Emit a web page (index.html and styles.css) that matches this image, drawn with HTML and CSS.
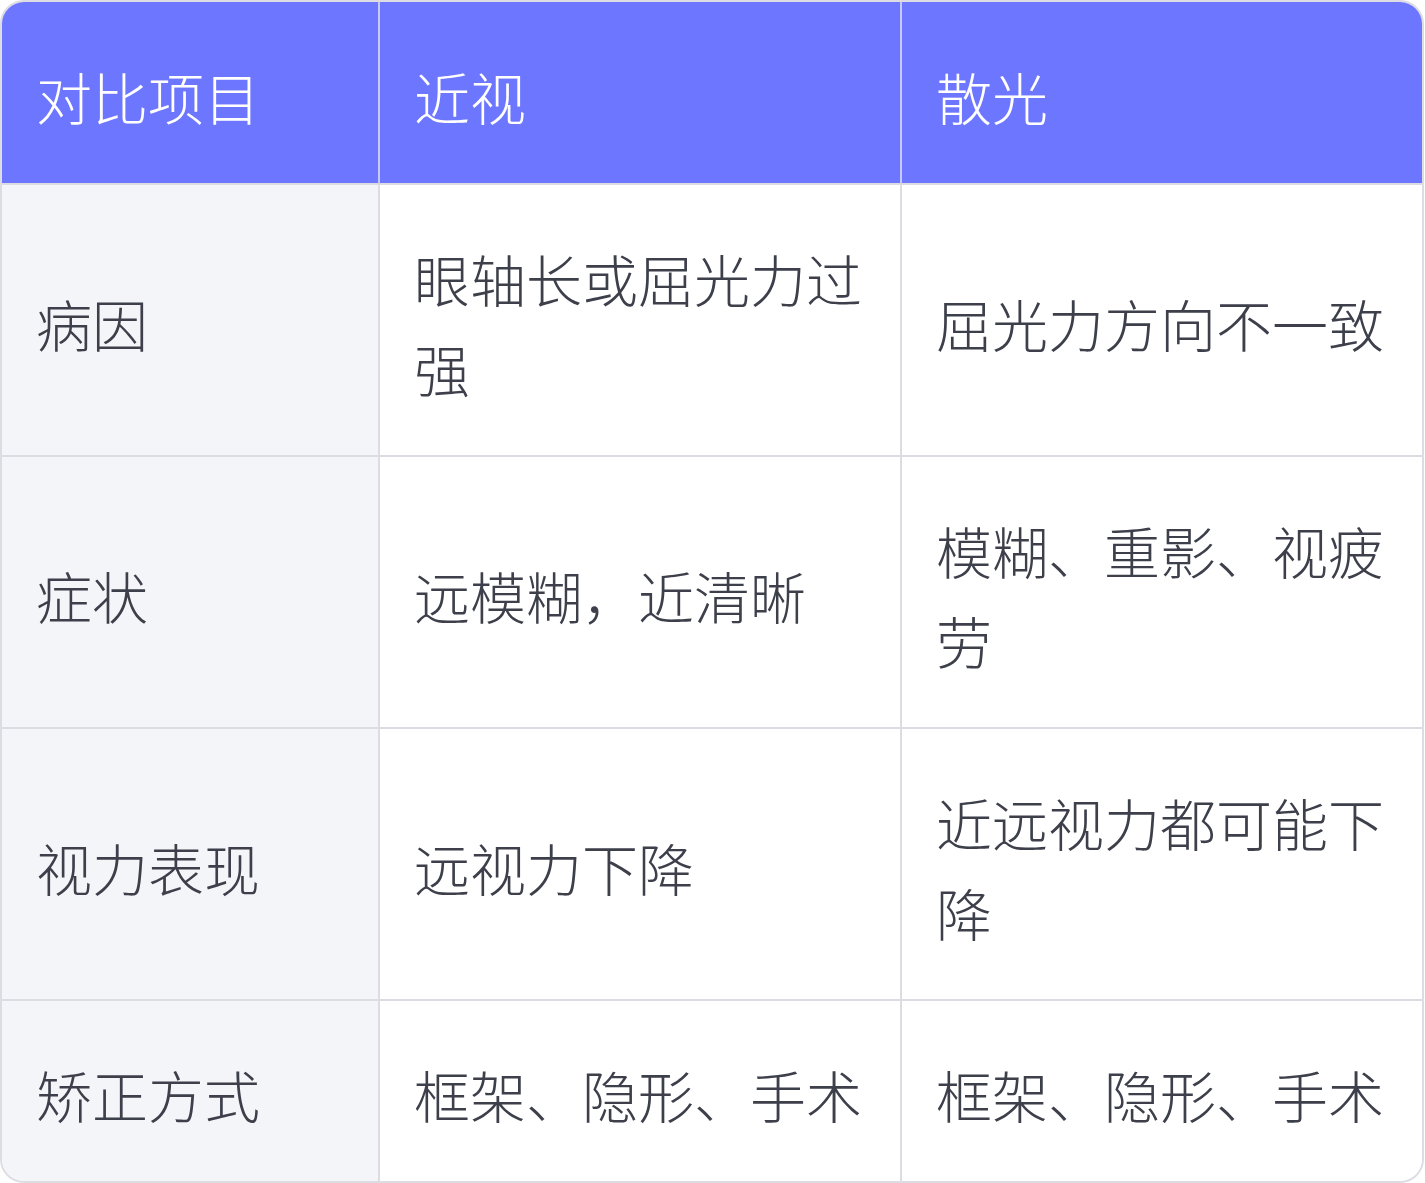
FILE: index.html
```html
<!DOCTYPE html>
<html lang="zh-CN">
<head>
<meta charset="utf-8">
<title>近视与散光对比</title>
<link rel="stylesheet" href="styles.css">
</head>
<body>
<div class="table">
  <div class="cell head">对比项目</div>
  <div class="cell head">近视</div>
  <div class="cell head last">散光</div>

  <div class="cell label">病因</div>
  <div class="cell">眼轴长或屈光力过强</div>
  <div class="cell last">屈光力方向不一致</div>

  <div class="cell label">症状</div>
  <div class="cell">远模糊，近清晰</div>
  <div class="cell last">模糊、重影、视疲劳</div>

  <div class="cell label">视力表现</div>
  <div class="cell">远视力下降</div>
  <div class="cell last">近远视力都可能下降</div>

  <div class="cell label bottom">矫正方式</div>
  <div class="cell bottom">框架、隐形、手术</div>
  <div class="cell last bottom">框架、隐形、手术</div>
</div>
</body>
</html>
```

FILE: styles.css
```css
html, body {
  margin: 0;
  padding: 0;
  background: #ffffff;
}

.table {
  box-sizing: border-box;
  width: 1424px;
  display: grid;
  grid-template-columns: 378px 522px 520px;
  border: 2px solid #dcdce2;
  border-radius: 24px;
  overflow: hidden;
  font-family: "Noto Sans CJK SC", "Noto Sans", sans-serif;
  font-weight: 300;
  font-size: 56px;
  line-height: 90px;
  color: #3d404b;
}

.cell {
  display: flex;
  align-items: center;
  padding: 48px 35px 42px 34px;
  border-right: 2px solid #dcdce2;
  border-bottom: 2px solid #dcdce2;
  background: #ffffff;
  word-break: break-all;
}

.cell.last {
  border-right: none;
}

.cell.bottom {
  border-bottom: none;
}

.cell.head {
  background: #6d76ff;
  color: #ffffff;
  padding-top: 49px;
  padding-bottom: 42px;
  border-right-color: #c7caf9;
}

.cell.head.last {
  border-right: none;
}

.cell.label {
  background: #f4f5f9;
}
```
